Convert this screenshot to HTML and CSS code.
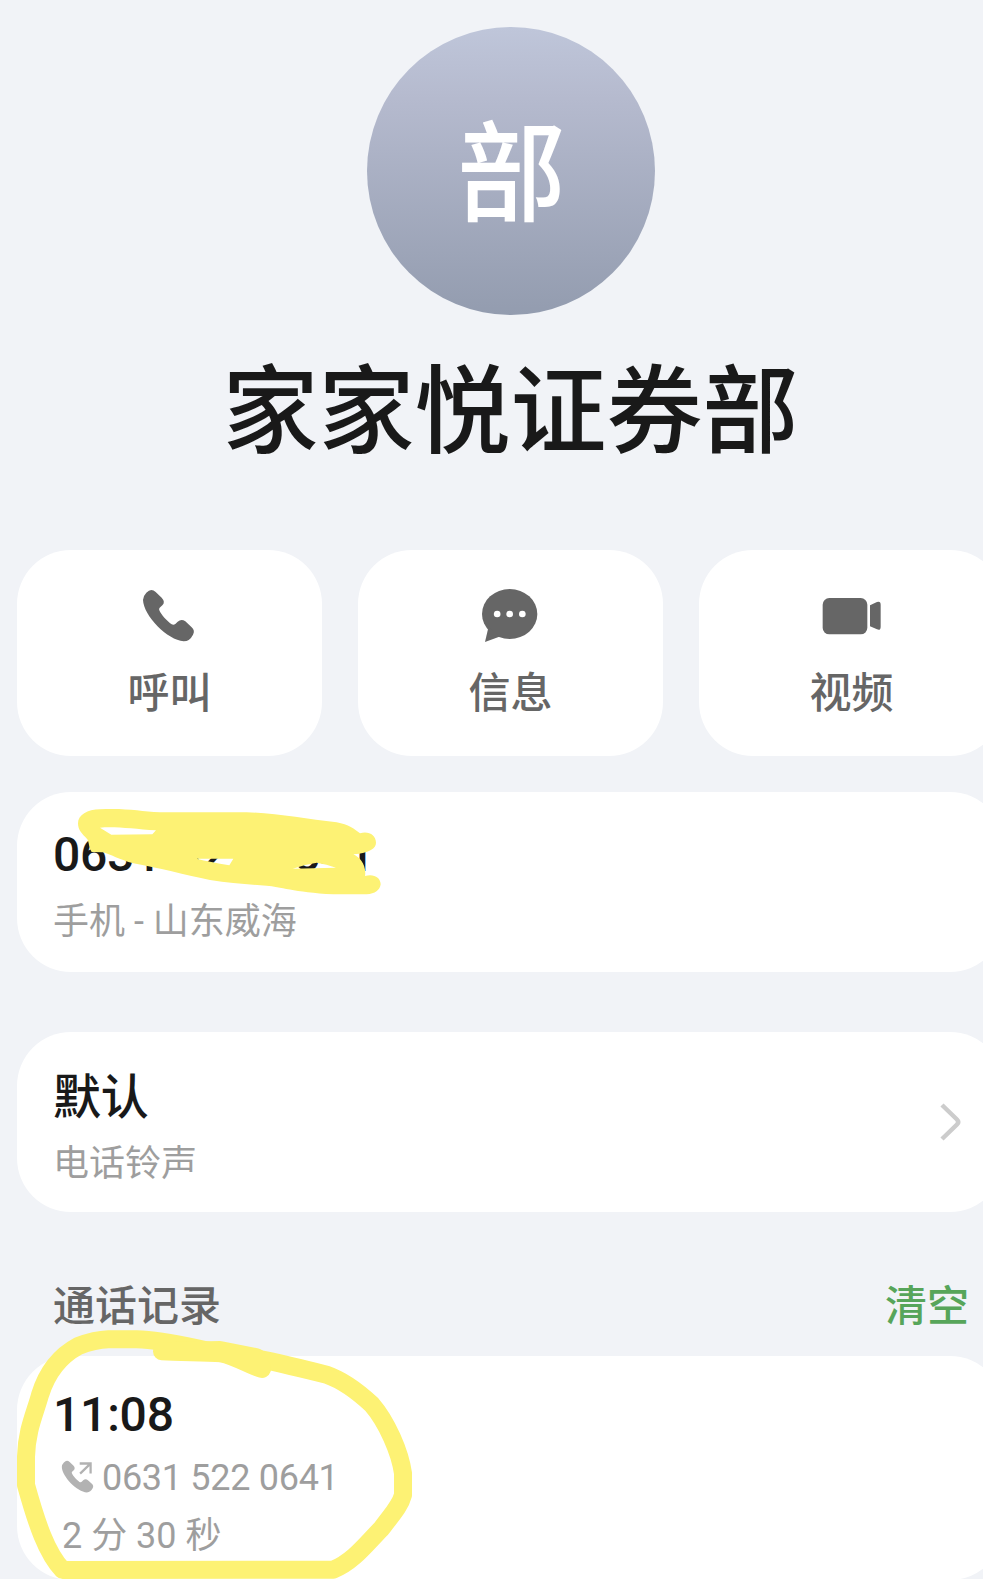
FILE: index.html
```
<!DOCTYPE html>
<html lang="zh-CN">
<head>
	<meta charset="UTF-8">

	<title>家家悦证券部</title>

	<meta name="viewport" content="width=device-width, initial-scale=1">
	<link rel="stylesheet" href="styles.css">
</head>



<body>
<main>
	<header class="contact">
		<div class="avatar">部</div>
		<h1>家家悦证券部</h1>
	</header>

	<ul class="actions">
		<li>
			<svg class="icon" viewBox="0 0 180 180"><path d="M22 20Q30 12 37 12Q44 12 50 18L68 35Q80 48 70 58L62 65Q59 68 61 73C66 85 84 106 98 115Q104 118 109 114L116 107Q127 98 139 106L158 124Q169 134 162 146Q152 166 134 166C86 162 14 90 12 42Q12 30 22 20Z"/></svg>
			<span>呼叫</span>
		</li>
		<li>
			<svg class="icon" viewBox="0 0 180 180"><ellipse cx="89" cy="84" rx="83" ry="75"/><path d="M25 125L15 168L62 151Z"/><g fill="#fff"><circle cx="51.500" cy="84" r="10"/><circle cx="89" cy="84" r="10"/><circle cx="127" cy="84" r="10"/></g></svg>
			<span>信息</span>
		</li>
		<li>
			<svg class="icon" viewBox="0 0 180 180"><rect x="5" y="36" width="134" height="109" rx="20"/><path d="M147 58L168 48Q179 44 179 56V122Q179 135 168 130L147 121Z"/></svg>
			<span>视频</span>
		</li>
	</ul>

	<section class="card number">
		<p class="primary">0631 522 0641</p>
		<p class="secondary">手机 - 山东威海</p>
		<!-- marker over the number -->
		<svg class="marker scribble" viewBox="0 0 1260 600"><path fill-rule="evenodd" d="M234 130C234 105 262 88 300 88C380 84 420 94 480 97L740 97C830 99 920 118 1010 127C1045 133 1065 148 1080 160C1105 152 1128 165 1128 188C1128 205 1110 218 1060 223C1080 232 1100 255 1095 288C1120 280 1142 292 1142 313C1140 330 1125 342 1100 343L1000 343C880 336 840 320 800 317C740 313 690 309 630 300C560 286 470 262 400 250C360 240 330 222 308 217L275 216C265 200 268 188 262 178C245 160 234 150 234 130ZM300 143C340 138 400 146 468 151L457 163L334 164ZM590 236L700 236L688 256Q630 246 590 236ZM878 266Q910 254 950 248Q980 252 1008 263Q940 264 878 266Z"/></svg>
	</section>

	<section class="card ringtone">
		<div>
			<p class="primary">默认</p>
			<p class="secondary">电话铃声</p>
		</div>
		<svg class="chevron" viewBox="0 0 24 42"><path d="M3 4L18 18.500Q20.500 21 18 23.500L3 38"/></svg>
	</section>

	<div class="log-header">
		<h2>通话记录</h2>
		<a>清空</a>
	</div>

	<section class="card log">
		<p class="primary">11:08</p>
		<p class="secondary call">
			<svg class="outgoing" viewBox="0 0 180 180"><path transform="translate(-8 -8)" d="M22 20Q30 12 37 12Q44 12 50 18L68 35Q80 48 70 58L62 65Q59 68 61 73C66 85 84 106 98 115Q104 118 109 114L116 107Q127 98 139 106L158 124Q169 134 162 146Q152 166 134 166C86 162 14 90 12 42Q12 30 22 20Z"/><path class="arrow" d="M91 17H144V66M142 19L93 66"/></svg>
			0631 522 0641
		</p>
		<p class="secondary duration">2 分 30 秒</p>
		<!-- marker ring around the entry -->
		<svg class="marker ring" viewBox="0 0 1290 927"><path d="M188 900C140 850 110 760 78 645V560C80 480 105 430 120 375C140 310 175 260 235 228C270 215 300 209 325 208H410C500 210 580 235 665 250C740 255 850 282 980 314C1040 335 1085 375 1115 403C1160 455 1200 545 1209 610V675C1200 710 1170 740 1145 775C1100 820 1060 875 1000 899Z"/><path d="M486 244C540 248 600 246 665 250C710 262 750 285 786 297L770 262L660 240Z"/></svg>
	</section>
</main>
</body>
</html>
```
FILE: styles.css
```
*,
::before,
::after {
	box-sizing: border-box;
}
body {
	height: 1579px;
	margin: 0;
	overflow: hidden;
	background: #f1f3f7;
	color: #191919;
	font-family: Roboto, "Noto Sans CJK SC", sans-serif;
}
h1,
h2,
p,
ul {
	margin: 0;
	padding: 0;
	font-weight: 500;
}
/* the sheet is a little wider than the window and runs off its right edge */
main {
	width: 1004px;
	padding: 27px 0 0 17px;
}
.contact {
	display: flex;
	flex-direction: column;
	align-items: center;
}
.avatar {
	width: 288px;
	height: 288px;
	padding-left: 2px;
	border-radius: 50%;
	background: linear-gradient(#bfc6da, #b5bace 25%, #939caf);
	color: #fff;
	text-align: center;
	line-height: 298px;
	font-size: 109px;
	font-weight: 500;
}
h1 {
	height: 120px;
	margin: 37px 0 78px;
	line-height: 120px;
	font-size: 96px;
}
.actions {
	display: flex;
	gap: 36px;
	list-style: none;
}
.actions li {
	flex: 1;
	height: 206px;
	display: flex;
	flex-direction: column;
	align-items: center;
	gap: 20px;
	padding-top: 36px;
	border-radius: 54px;
	background: #fff;
	color: #666;
	line-height: 56px;
	font-size: 42px;
	font-weight: 500;
}
.icon {
	width: 60px;
	height: 60px;
	margin-right: 2px;
	fill: #666;
}
.card {
	position: relative;
	height: 180px;
	padding: 35px 36px;
	border-radius: 54px;
	background: #fff;
}
.number {
	margin-top: 36px;
}
.primary {
	line-height: 56px;
	font-size: 48px;
	letter-spacing: -0.2px;
}
.secondary {
	margin-top: 11px;
	color: #9e9e9e;
	line-height: 56px;
	font-size: 36px;
	font-weight: 400;
}
.ringtone {
	display: flex;
	justify-content: space-between;
	align-items: flex-start;
	margin-top: 60px;
	padding-top: 38px;
}
.ringtone .secondary {
	margin-top: 10px;
}
.chevron {
	width: 24px;
	height: 42px;
	margin: 31px 5px 0 0;
	fill: none;
	stroke: #ccc;
	stroke-width: 4.500;
}
.log-header {
	height: 144px;
	display: flex;
	justify-content: space-between;
	padding: 67px 35px 0 36px;
	color: #666;
	line-height: 56px;
	font-size: 42px;
	font-weight: 500;
}
h2 {
	font-size: 42px;
}
.log-header a {
	color: #57a55a;
}
.log {
	height: 224px;
	padding-top: 31px;
}
.call {
	display: flex;
	align-items: center;
	gap: 4px;
	margin-top: 7px;
	padding-left: 8px;
	letter-spacing: -0.3px;
}
.outgoing {
	width: 37px;
	height: 37px;
	fill: #b2b2b2;
}
.arrow {
	fill: none;
	stroke: #b2b2b2;
	stroke-width: 11;
}
.duration {
	margin-top: 2px;
	padding-left: 9px;
}
.marker {
	position: absolute;
	left: -17px;
	fill: #fdf274;
}
.scribble {
	top: -12px;
	width: 420px;
	height: 200px;
}
.ring {
	top: -86px;
	width: 430px;
	height: 309px;
	fill: none;
	stroke: #fdf274;
	stroke-width: 54;
	stroke-linejoin: round;
}
```
